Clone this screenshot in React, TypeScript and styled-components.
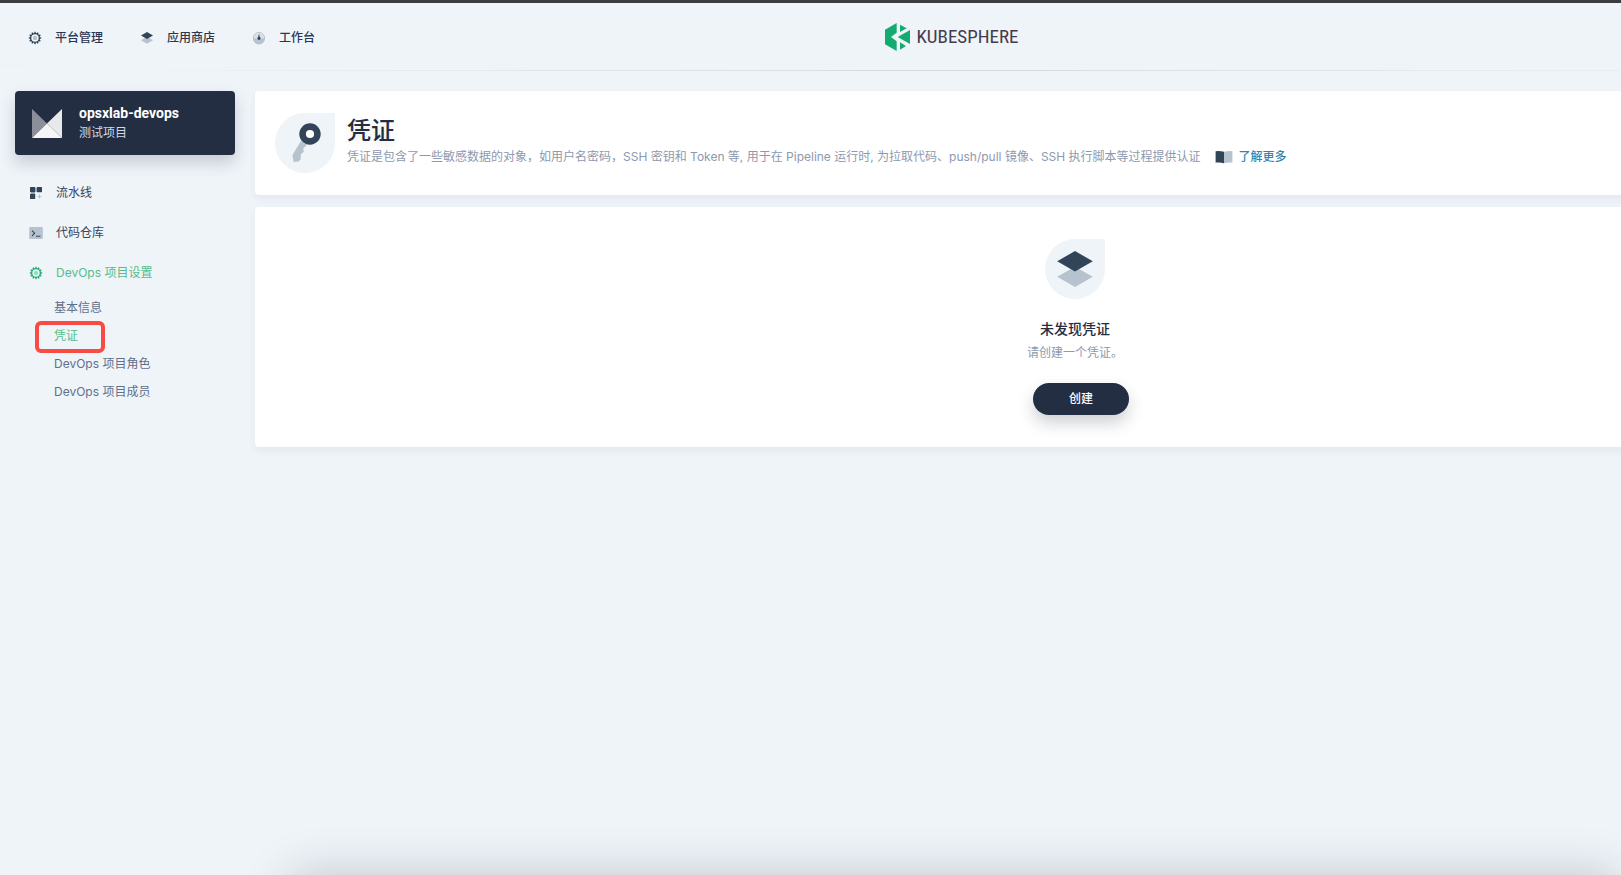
import React from "react";
import styled, { createGlobalStyle } from "styled-components";

const ink = "#242e42";
const slate = "#324558";
const mist = "#b6c2cd";
const green = "#55bc8a";
const sans = `Roboto, "Noto Sans CJK SC", sans-serif`;
const wide = `Inter, "Noto Sans CJK SC", sans-serif`;

const GlobalStyle = createGlobalStyle`
  *, *::before, *::after { box-sizing: border-box; }
  body {
    margin: 0;
    background: #eff4f9;
    color: ${ink};
    font-family: ${sans};
    font-size: 12px;
    line-height: 20px;
    overflow-x: hidden;
  }
  h1, h2, p, ul { margin: 0; padding: 0; }
  ul { list-style: none; }
  a { color: inherit; text-decoration: none; }
  svg { display: block; flex: none; }
`;

const Viewport = styled.div`
  min-height: 100vh;
  overflow: hidden;
  border-top: 3px solid #3d3d3f;
`;

/* The console keeps a wide canvas that runs past the right of the window. */
const Canvas = styled.div`
  width: calc(100% + 282px);
`;

const TopBar = styled.header`
  display: grid;
  grid-template-columns: 1fr auto 1fr;
  align-items: center;
  height: 68px;
  padding: 0 27px;
  border-bottom: 1px solid;
  border-image: linear-gradient(to right, #f3f7fa 0%, #e9eef3 15%, #d8dde3 45%, #d8dde3 55%, #e9eef3 85%, #f3f7fa 100%) 1;
`;

const TopNav = styled.nav`
  display: flex;
  gap: 36px;
  padding-top: 2px;
`;

const TopLink = styled.a`
  display: flex;
  align-items: center;
  gap: 12px;
  color: #2c3650;
  font-weight: 500;
`;

const Brand = styled.a`
  display: flex;
  align-items: center;
  gap: 7px;
  color: #443c4c;
  font-family: "Liberation Sans Narrow", "Roboto Condensed", Roboto, sans-serif;
  font-size: 19px;
  line-height: 28px;
`;

const Body = styled.div`
  display: flex;
  align-items: flex-start;
  gap: 20px;
  padding: 20px 8px 20px 15px;
`;

const Sidebar = styled.aside`
  flex: none;
  width: 220px;
`;

const ProjectCard = styled.button`
  display: flex;
  align-items: center;
  gap: 17px;
  width: 100%;
  height: 64px;
  padding: 0 17px;
  border: 0;
  border-radius: 4px;
  background: ${ink};
  box-shadow: 0 8px 16px rgba(36, 46, 66, 0.2);
  color: #d5dae2;
  font: 12px/20px ${sans};
  text-align: left;
`;

const ProjectName = styled.strong`
  display: block;
  color: #fff;
  font-size: 14px;
  font-weight: 700;
`;

const Menu = styled.ul`
  padding-top: 18px;
`;

const MenuLink = styled.a<{ $active?: boolean }>`
  display: flex;
  align-items: center;
  gap: 12px;
  height: 40px;
  padding-left: 13px;
  color: ${(p) => (p.$active ? green : "#36435c")};
  font-family: ${wide};
`;

const SubMenu = styled.ul`
  padding: 1px 0 0 20px;
`;

const SubLink = styled.a<{ $active?: boolean }>`
  position: relative;
  display: flex;
  align-items: center;
  width: 70px;
  height: 28px;
  padding-left: 19px;
  color: ${(p) => (p.$active ? green : "#5f708a")};
  font-family: ${wide};
  white-space: nowrap;
`;

const Marker = styled.span`
  position: absolute;
  inset: -1px 0 -3px;
  border: 4px solid #f94b46;
  border-radius: 6px;
`;

const Main = styled.main`
  display: flex;
  flex: 1;
  flex-direction: column;
  gap: 12px;
  min-width: 0;
`;

const Panel = styled.section`
  border-radius: 4px;
  background: #fff;
  box-shadow: 0 4px 8px rgba(36, 46, 66, 0.06);
`;

const Intro = styled(Panel)`
  display: flex;
  align-items: flex-start;
  gap: 12px;
  padding: 22px 20px;
`;

const Leaf = styled.span`
  flex: none;
  width: 60px;
  height: 60px;
  border-radius: 50% 0 50% 50%;
  background: #eff4f9;
`;

const Title = styled.h1`
  padding-top: 2px;
  font-size: 24px;
  font-weight: 500;
  line-height: 32px;
  text-shadow: 0 4px 8px rgba(36, 46, 66, 0.1);
`;

const Description = styled.p`
  display: flex;
  align-items: center;
  gap: 14px;
  color: #8d99ae;
  font-family: ${wide};
  white-space: nowrap;
`;

const MoreLink = styled.a`
  display: flex;
  align-items: center;
  gap: 6px;
  color: #3385b0;
  font-weight: 500;
`;

const Empty = styled(Panel)`
  display: flex;
  flex-direction: column;
  align-items: center;
  padding: 32px 20px;
`;

const EmptyTitle = styled.h2`
  padding-top: 20px;
  font-size: 14px;
  font-weight: 500;
  line-height: 20px;
`;

const EmptyText = styled.p`
  padding-top: 4px;
  color: #8d99ae;
`;

const CreateButton = styled.button`
  width: 96px;
  height: 32px;
  margin: 20px 0 0 12px;
  border: 0;
  border-radius: 16px;
  background: ${ink};
  box-shadow: 0 8px 16px rgba(36, 46, 66, 0.22);
  color: #fff;
  font: 500 12px/20px ${sans};
`;

const DockShade = styled.div`
  position: fixed;
  top: 100%;
  left: 292px;
  right: 4px;
  height: 60px;
  box-shadow: 0 0 48px rgba(24, 30, 36, 0.22);
`;

const teeth = Array.from({ length: 12 }, (_, i) => i * 30);

function GearIcon({ dark = slate, light = mist }: { dark?: string; light?: string }) {
  return (
    <svg width="16" height="16" viewBox="0 0 16 16" aria-hidden="true">
      <circle cx="8" cy="8" r="4.4" fill="none" stroke={dark} strokeWidth="1.4" />
      {teeth.map((a) => (
        <rect key={a} x="7.3" y="1.8" width="1.4" height="1.8" fill={dark} transform={`rotate(${a} 8 8)`} />
      ))}
      <circle cx="8" cy="8" r="2.2" fill={light} />
    </svg>
  );
}

function StackIcon() {
  return (
    <svg width="16" height="16" viewBox="0 0 16 16" aria-hidden="true">
      <path d="M8 6.6l6 3.6-6 3.6-6-3.6z" fill={mist} />
      <path d="M8 1.9l6 3.6-6 3.6-6-3.6z" fill={slate} />
    </svg>
  );
}

function DashboardIcon() {
  return (
    <svg width="16" height="16" viewBox="0 0 16 16" aria-hidden="true">
      <circle cx="8" cy="8" r="5.6" fill="#dbe3ea" stroke={mist} strokeWidth="0.9" />
      <path d="M2.2 8.6h11.6a5.8 5.8 0 0 1-11.6 0z" fill={mist} />
      <path d="M8 3.8l.8 3.1a1.6 1.6 0 1 1-1.6 0z" fill={slate} />
    </svg>
  );
}

function PipelineIcon() {
  return (
    <svg width="16" height="16" viewBox="0 0 16 16" aria-hidden="true">
      <path d="M3 6h4v5H3zM6 3h4v4H6z" fill={mist} />
      <rect x="2" y="2" width="5.2" height="5.2" rx="0.6" fill={slate} />
      <rect x="8.8" y="2" width="5.2" height="5.2" rx="0.6" fill={slate} />
      <rect x="2" y="8.8" width="5.2" height="5.2" rx="0.6" fill={slate} />
      <path d="M11.5 9.5v4M9.5 11.5h4" stroke={mist} strokeWidth="1" />
    </svg>
  );
}

function TerminalIcon() {
  return (
    <svg width="16" height="16" viewBox="0 0 16 16" aria-hidden="true">
      <rect x="1.2" y="2" width="13.6" height="12" rx="1" fill={mist} />
      <path d="M4 5.6l2.6 2.6L4 10.8M8 11.2h4.4" fill="none" stroke={slate} strokeWidth="1.1" />
    </svg>
  );
}

function ProjectIcon() {
  return (
    <svg width="30" height="30" viewBox="0 0 30 30" aria-hidden="true">
      <path d="M0 1l15 14.5L0 30z" fill="#8c8f99" />
      <path d="M30 1v29L15 15.5z" fill="#e9e9ec" />
      <path d="M0 30L30 1 15 15.5 30 30z" fill="#f5f5f6" />
    </svg>
  );
}

function KeyIcon() {
  return (
    <svg width="60" height="60" viewBox="0 0 60 60" aria-hidden="true">
      <path d="M26 28L18.3 40.5c-.8 1.4-.8 2.8-.5 4.2l1 4.3 4.6-.4 2.2-2.2.2-5 3-2.8-.6-3 4.8-4.8z" fill={mist} />
      <circle cx="35" cy="21" r="7.4" fill="#fff" stroke={slate} strokeWidth="6.6" />
    </svg>
  );
}

function LargeStackIcon() {
  return (
    <svg width="60" height="60" viewBox="0 0 60 60" aria-hidden="true">
      <path d="M30 27.7l17.8 10.1L30 48 12.2 37.8z" fill={mist} />
      <path d="M30 12l17.8 10.3L30 32.5 12.2 22.3z" fill={slate} />
    </svg>
  );
}

function BookIcon() {
  return (
    <svg width="18" height="14" viewBox="0 0 18 14" aria-hidden="true">
      <path d="M.6 1.2Q5 .6 9 1.8v11.4Q5 12 .6 12.6z" fill={slate} />
      <path d="M17.4 1.2Q13 .6 9 1.8v11.4q4-1.2 8.4-.6z" fill={mist} />
    </svg>
  );
}

function BrandMark() {
  return (
    <svg width="25" height="28" viewBox="0 0 75 84" aria-hidden="true">
      <g fill="#14ab70">
        <path d="M0 20L35 0v29L18 42l17 13v29L0 64z" />
        <path d="M45 5l20 11-20 11z" />
        <path d="M75 21v42L38 42z" />
        <path d="M45 58l18 11-18 11z" />
      </g>
    </svg>
  );
}

export default function App() {
  return (
    <Viewport>
      <GlobalStyle />
      <Canvas>
        <TopBar>
          <TopNav>
            <TopLink href="#platform"><GearIcon />平台管理</TopLink>
            <TopLink href="#store"><StackIcon />应用商店</TopLink>
            <TopLink href="#workbench"><DashboardIcon />工作台</TopLink>
          </TopNav>
          <Brand href="#home"><BrandMark />KUBESPHERE</Brand>
        </TopBar>
        <Body>
          <Sidebar>
            <ProjectCard type="button">
              <ProjectIcon />
              <span>
                <ProjectName>opsxlab-devops</ProjectName>
                测试项目
              </span>
            </ProjectCard>
            <nav>
              <Menu>
                <li><MenuLink href="#pipelines"><PipelineIcon />流水线</MenuLink></li>
                <li><MenuLink href="#repos"><TerminalIcon />代码仓库</MenuLink></li>
                <li>
                  <MenuLink href="#settings" $active><GearIcon dark="#1fae76" light="#9adcc0" />DevOps 项目设置</MenuLink>
                  <SubMenu>
                    <li><SubLink href="#basic">基本信息</SubLink></li>
                    <li><SubLink href="#credentials" $active>凭证<Marker /></SubLink></li>
                    <li><SubLink href="#roles">DevOps 项目角色</SubLink></li>
                    <li><SubLink href="#members">DevOps 项目成员</SubLink></li>
                  </SubMenu>
                </li>
              </Menu>
            </nav>
          </Sidebar>
          <Main>
            <Intro>
              <Leaf><KeyIcon /></Leaf>
              <div>
                <Title>凭证</Title>
                <Description>
                  凭证是包含了一些敏感数据的对象，如用户名密码，SSH 密钥和 Token 等, 用于在 Pipeline 运行时, 为拉取代码、push/pull 镜像、SSH 执行脚本等过程提供认证
                  <MoreLink href="#docs"><BookIcon />了解更多</MoreLink>
                </Description>
              </div>
            </Intro>
            <Empty>
              <Leaf><LargeStackIcon /></Leaf>
              <EmptyTitle>未发现凭证</EmptyTitle>
              <EmptyText>请创建一个凭证。</EmptyText>
              <CreateButton type="button">创建</CreateButton>
            </Empty>
          </Main>
        </Body>
      </Canvas>
      <DockShade />
    </Viewport>
  );
}
